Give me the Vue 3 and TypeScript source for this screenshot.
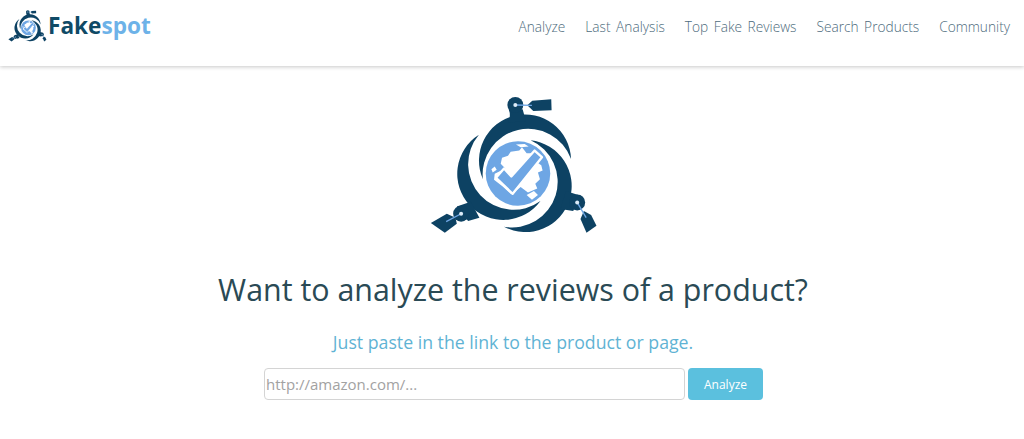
<script setup lang="ts">
const navItems = ['Analyze', 'Last Analysis', 'Top Fake Reviews', 'Search Products', 'Community']
const crescent = 'M330 165 A138.5 138.5 0 1 1 250 425 A137 137 0 0 0 330 165 Z'
const rotations = [0, 120, 240]
const knobs = [
  { x: 284, y: 59, tx: 334, ty: 60 },
  { x: 470, y: 352, tx: 497, ty: 398 },
  { x: 121, y: 386, tx: 76, ty: 410 },
]
</script>

<template>
  <svg class="defs" width="0" height="0" aria-hidden="true">
    <symbol id="fs-logo" viewBox="25 20 510 430">
      <path
        v-for="r in rotations"
        :key="r"
        :d="crescent"
        fill="#0d4263"
        :transform="`rotate(${r} 292 265)`"
      />
      <!-- knobs, necks and price tags -->
      <g fill="#0d4263">
        <path d="M264 72 L306 72 L316 108 L262 112 Q272 92 264 72 Z" />
        <path d="M335 46 L392 42 L393 75 L338 77 L320 60 Z" />
        <path d="M480 332 L458 378 L420 372 L436 318 Z" />
        <path d="M490 378 L512 390 L528 422 L498 443 L480 402 Z" />
        <path d="M108 364 L142 408 L176 398 L150 350 Z" />
        <path d="M30 414 L78 386 L104 398 L108 416 L72 443 Z" />
      </g>
      <g fill="#0d4263">
        <circle v-for="k in knobs" :key="k.x" :cx="k.x" :cy="k.y" r="24" />
      </g>
      <g stroke="#6ea6e4" stroke-width="4">
        <line v-for="k in knobs" :key="k.x" :x1="k.x" :y1="k.y" :x2="k.tx" :y2="k.ty" />
      </g>
      <g fill="#dcebf8">
        <circle v-for="k in knobs" :key="k.x" :cx="k.x" :cy="k.y" r="6" />
      </g>
      <!-- globe -->
      <circle cx="292" cy="265" r="97" fill="#6ea6e4" />
      <path
        d="M244 218 L262 212 L270 200 L296 196 L304 186 L318 204 L338 204 L352 216 L344 228 L362 240 L366 256 L352 262 L358 282 L344 296 L350 310 L322 322 L300 306 L272 328 L246 304 L220 284 L222 266 L254 250 L240 236 Z"
        fill="#fff"
      />
      <path d="M318 330 L340 318 L352 330 L334 344 Z M286 178 L312 176 L324 184 L300 186 Z M212 252 L222 244 L228 254 L216 262 Z" fill="#fff" />
      <path d="M226 278 L250 250 L272 274 L342 196 L364 216 L276 326 Z" fill="#6ea6e4" stroke="#fff" stroke-width="7" stroke-linejoin="round" />
    </symbol>
  </svg>

  <header class="topbar">
    <a class="brand">
      <svg class="brand-mark"><use href="#fs-logo" /></svg>
      <span class="brand-name">Fake<span class="brand-accent">spot</span></span>
    </a>
    <nav class="nav">
      <a v-for="item in navItems" :key="item">{{ item }}</a>
    </nav>
  </header>

  <main class="hero">
    <svg class="hero-logo"><use href="#fs-logo" /></svg>
    <h1>Want to analyze the reviews of a product?</h1>
    <p>Just paste in the link to the product or page.</p>
    <form class="search" @submit.prevent>
      <input type="text" placeholder="http://amazon.com/..." />
      <button type="submit">Analyze</button>
    </form>
  </main>
</template>

<style>
html,
body {
  background: #fff;
}
</style>

<style scoped>
.defs {
  position: absolute;
}

.topbar {
  height: 66px;
  display: flex;
  justify-content: space-between;
  align-items: flex-start;
  padding: 0 14px 0 8px;
  box-shadow: 0 1px 4px rgba(0, 0, 0, 0.22);
  font-family: "Open Sans", sans-serif;
}

.brand {
  display: flex;
  align-items: center;
  gap: 1px;
  margin-top: 9px;
}

.brand-mark {
  width: 39px;
  height: 33px;
}

.brand-name {
  font-size: 22.6px;
  font-weight: 700;
  color: #0f4a66;
  line-height: 33px;
}

.brand-accent {
  color: #6db2e8;
}

.nav {
  display: flex;
  gap: 20px;
  margin-top: 17px;
  font-size: 13.7px;
  font-weight: 300;
  line-height: 20px;
  word-spacing: 2px;
  color: #4d6b7c;
}

.hero {
  display: flex;
  flex-direction: column;
  align-items: center;
  font-family: "Open Sans", sans-serif;
}

.hero-logo {
  width: 170px;
  height: 143px;
  margin: 26px 0 0 3px;
}

h1 {
  margin: 33px 0 0 2px;
  font-size: 30.4px;
  font-weight: 400;
  line-height: 44px;
  color: #2a4a55;
}

p {
  margin: 17px 0 0 2px;
  font-size: 17.7px;
  line-height: 26px;
  color: #5fb3d4;
}

.search {
  display: flex;
  gap: 3px;
  margin-top: 13px;
  padding-left: 3px;
}

input {
  width: 421px;
  height: 32px;
  box-sizing: border-box;
  padding: 0 1px;
  border: 1px solid #d4d4d4;
  border-radius: 4px;
  font-family: inherit;
  font-size: 15px;
  outline: none;
}

input::placeholder {
  color: #a2a2a2;
  opacity: 1;
}

button {
  width: 75px;
  height: 32px;
  border: none;
  border-radius: 4px;
  background: #5bc0de;
  color: #fff;
  font-family: inherit;
  font-size: 12px;
}
</style>
